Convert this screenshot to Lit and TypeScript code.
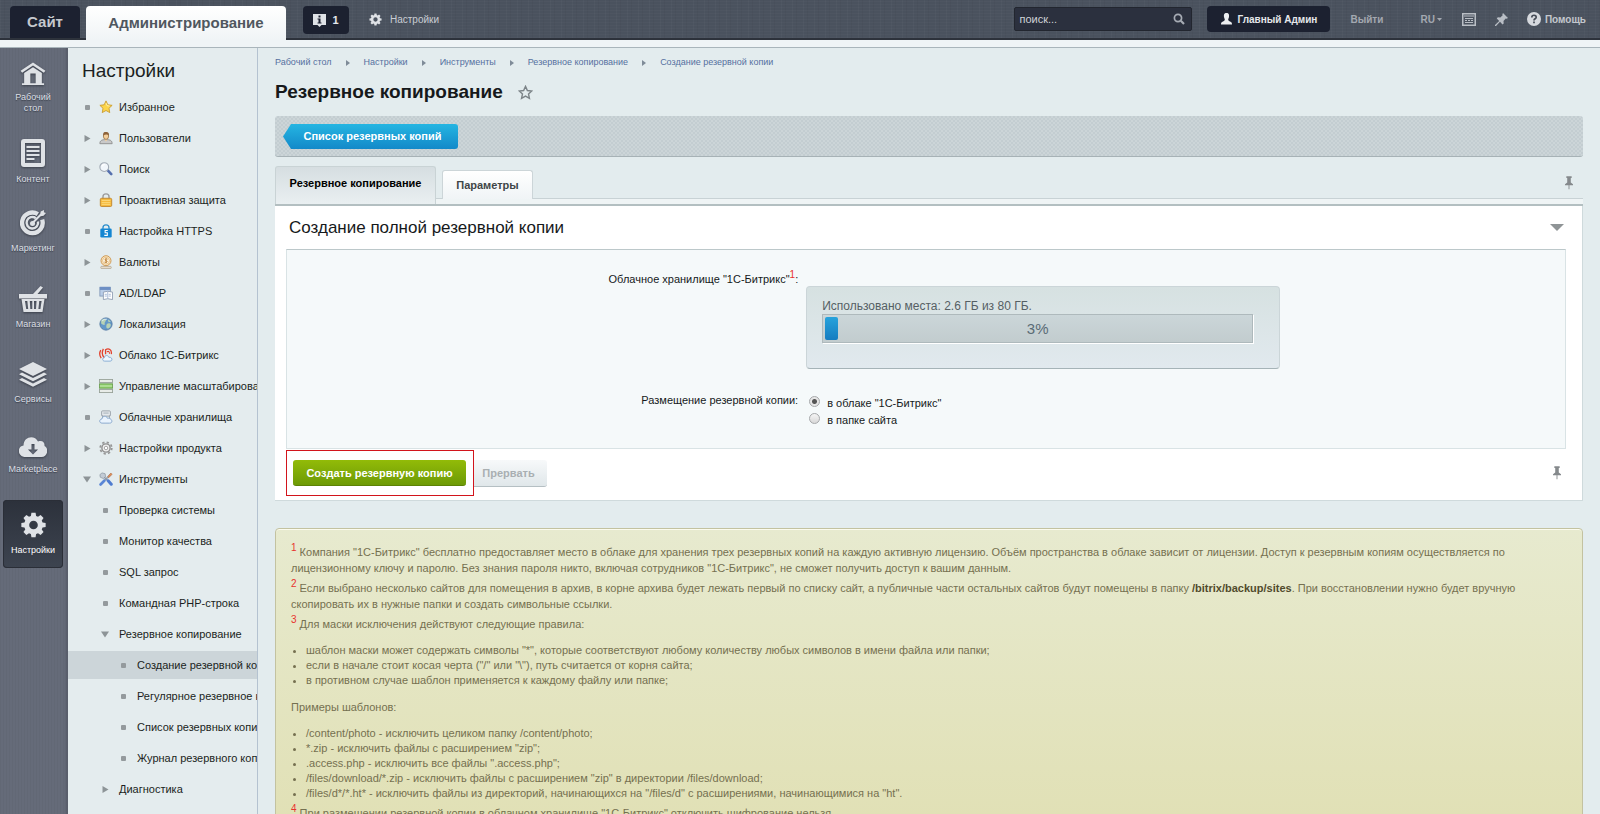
import { LitElement, html, css, svg, nothing } from "lit";
import { customElement, state } from "lit/decorators.js";
import { classMap } from "lit/directives/class-map.js";

type Kind = "leaf" | "closed" | "open";
interface MenuItem { text: string; kind: Kind; level: number; icon?: string; active?: boolean; }
interface RailItem { text: string; icon: string; w: number; h: number; box: string; far?: boolean; active?: boolean; }

const MENU: MenuItem[] = [
  { text: "Избранное", kind: "leaf", level: 1, icon: "star" },
  { text: "Пользователи", kind: "closed", level: 1, icon: "user" },
  { text: "Поиск", kind: "closed", level: 1, icon: "loupe" },
  { text: "Проактивная защита", kind: "closed", level: 1, icon: "lock" },
  { text: "Настройка HTTPS", kind: "leaf", level: 1, icon: "https" },
  { text: "Валюты", kind: "closed", level: 1, icon: "coin" },
  { text: "AD/LDAP", kind: "leaf", level: 1, icon: "ldap" },
  { text: "Локализация", kind: "closed", level: 1, icon: "globe" },
  { text: "Облако 1С-Битрикс", kind: "closed", level: 1, icon: "bxcloud" },
  { text: "Управление масштабированием", kind: "closed", level: 1, icon: "scale" },
  { text: "Облачные хранилища", kind: "leaf", level: 1, icon: "storage" },
  { text: "Настройки продукта", kind: "closed", level: 1, icon: "cog" },
  { text: "Инструменты", kind: "open", level: 1, icon: "tools" },
  { text: "Проверка системы", kind: "leaf", level: 2 },
  { text: "Монитор качества", kind: "leaf", level: 2 },
  { text: "SQL запрос", kind: "leaf", level: 2 },
  { text: "Командная PHP-строка", kind: "leaf", level: 2 },
  { text: "Резервное копирование", kind: "open", level: 2 },
  { text: "Создание резервной копии", kind: "leaf", level: 3, active: true },
  { text: "Регулярное резервное копирование", kind: "leaf", level: 3 },
  { text: "Список резервных копий", kind: "leaf", level: 3 },
  { text: "Журнал резервного копирования", kind: "leaf", level: 3 },
  { text: "Диагностика", kind: "closed", level: 2 },
];

const SMALL: Record<string, unknown> = {
  star: svg`<path d="M8 1l2.1 4.5 4.900.6-3.600 3.400.9 4.900L8 12l-4.300 2.400.9-4.900L1 6.100l4.900-.6z" fill="#fcd54a" stroke="#c99a2c" stroke-linejoin="round"/><path d="M8 3.500l1.200 3 2.800.3" fill="none" stroke="#fff3b0"/>`,
  user: svg`<path d="M1 14.500c0-3.500 2-4.700 7-4.700s7 1.200 7 4.700z" fill="#c9c9c9" stroke="#8d8d8d"/><ellipse cx="8" cy="5.800" rx="3" ry="3.800" fill="#f3cf9c" stroke="#9c7346"/><path d="M4.800 5C4.500 1.500 6 1 8 1s3.700.7 3.300 4C10 3.600 7 3.600 4.800 5z" fill="#8d623a"/><path d="M6.500 10l1.500 2 1.500-2z" fill="#f3cf9c"/>`,
  loupe: svg`<path d="M10 9.500l4 4.300" stroke="#5670ae" stroke-width="3" stroke-linecap="round"/><circle cx="6" cy="5.800" r="5" fill="#f1f6fb" stroke="#a3abb5" stroke-width="1.300"/><path d="M3.500 5a3 3 0 0 1 3-2" fill="none" stroke="#fff" stroke-width="1.500"/>`,
  lock: svg`<path d="M4.500 7V4.500a3.500 3.500 0 0 1 7 0V7" fill="none" stroke="#9c9c9c" stroke-width="1.600"/><rect x="1.500" y="6" width="13" height="9.500" rx="1.500" fill="#f5b93c" stroke="#bd822a"/><path d="M3 8.500h10M3 11h10M3 13h10" stroke="#fbdc84"/>`,
  https: svg`<path d="M4.500 7V4.500a3.500 3.500 0 0 1 7 0V7" fill="none" stroke="#2c8ecb" stroke-width="1.500"/><rect x="1.500" y="5" width="13" height="10.500" rx="1.500" fill="#1486d2"/><path d="M10 7.500H7v2.500h2.500V13H6" fill="none" stroke="#fff" stroke-width="1.200"/>`,
  coin: svg`<circle cx="8" cy="6.500" r="5.700" fill="#fbe7c4" stroke="#c98f43"/><circle cx="8" cy="6.500" r="3.900" fill="#fdf3df" stroke="#dba75c" stroke-width=".7"/><path d="M9.700 4.800C7 3.500 6 6 8 6.400c2.500.5 1.200 3-1.800 1.700M8 3.700v5.600" fill="none" stroke="#b87a2c"/><rect x="2" y="13" width="12" height="2.500" rx="1" fill="#e8dccb" stroke="#a5977f" stroke-width=".7"/>`,
  ldap: svg`<rect x="1" y="1.500" width="12" height="10" fill="#b9cde8" stroke="#8298b8"/><rect x="1" y="1" width="12" height="3.500" fill="#6d8fc4"/><path d="M5 7l5-1 5.500 1v8.500l-5.500-1-5 1z" fill="#fff" stroke="#8b99b0"/><path d="M10 6.500v8M6.500 9.500h2.500M11 9.500h2.500M6.500 11.500h2.500M11 11.500h2.500" stroke="#9fb4d3"/>`,
  globe: svg`<circle cx="8" cy="8" r="7" fill="#6398c9" stroke="#557aa2"/><path d="M2.500 4c2-2.500 5.500-2 5.500-.5S6 6 6.500 8 4 9 2.500 7.500zM9 8c2-1.500 4.500-.5 4.500 1s-1.500 4-3.500 4-2-3-1-5zM10 2.500l3.500 2.500-2.500 1z" fill="#b8d2b4"/><path d="M3.500 4.500A6 6 0 0 1 9 2.500" fill="none" stroke="#e3f1fb"/>`,
  bxcloud: svg`<path d="M2 2.500C0 6 .7 9 2.500 11.500M5 1C3 5 4 9 6 11M7.500 7V2C11-.5 15 2 14 7" fill="none" stroke="#e2432f" stroke-width="1.500"/><path d="M9 4.500c2-1.500 3-.2 3 2" fill="none" stroke="#e2432f" stroke-width="1.200"/><path d="M6.500 15c-3 0-3-3.900-.3-4 .2-3 4.300-3.200 5-.4 4-.7 5 4.400 1.500 4.400z" fill="#eef6fd" stroke="#7fa6d0"/>`,
  scale: svg`<rect x=".5" y=".5" width="15" height="3.500" fill="#e8ece8" stroke="#97a197"/><rect x=".5" y="5.500" width="15" height="5" fill="#8ccf67" stroke="#6c9d53"/><path d="M1 8h14" stroke="#d7f0c8"/><rect x=".5" y="12" width="15" height="3.500" fill="#e8ece8" stroke="#97a197"/>`,
  storage: svg`<rect x="3" y="1" width="10" height="6" rx="1" fill="#e4e8eb" stroke="#929ba3"/><path d="M5 3.500h6M4 6v4M12 6v4" stroke="#9aa6b0"/><path d="M3.500 15c-3.600 0-3.500-4.400-.2-4.700.4-3.800 5.500-4 6.300-.9C14.500 8.500 17 15 12 15z" fill="#e9f3fd" stroke="#7fa0c8"/>`,
  cog: svg`<circle cx="8" cy="8" r="6.600" fill="none" stroke="#969696" stroke-width="2" stroke-dasharray="2.600 2.580"/><circle cx="8" cy="8" r="4.700" fill="#efefef" stroke="#8e8e8e" stroke-width="1.600"/><circle cx="8" cy="8" r="2" fill="#fff" stroke="#999"/>`,
  tools: svg`<path d="M2.500 13.500L13 3" stroke="#98a4b1" stroke-width="2"/><path d="M1 3l2.500-2L7 2l.5 3.500-2.500 2L1.500 6z" fill="#c2cbd5" stroke="#7f8a96" stroke-width=".7"/><path d="M6 6l3.500 3.500" stroke="#8d98a5" stroke-width="1.500"/><path d="M10.500 10l3.500 4" stroke="#4f7cd0" stroke-width="3.500" stroke-linecap="round"/><path d="M1.800 14.300L6 10" stroke="#5a86d6" stroke-width="3" stroke-linecap="round"/><path d="M10 5.500l3.500-4.300 1.500 1.500-4 3.800z" fill="#e5945c" stroke="#ad6842" stroke-width=".7"/>`,
};

const RAIL: RailItem[] = [
  { text: "Рабочий стол", icon: "home", w: 26, h: 23, box: "0 1 28 26" },
  { text: "Контент", icon: "doc", w: 24, h: 28, box: "2 0 24 28" },
  { text: "Маркетинг", icon: "target", w: 26, h: 26, box: "1 1 27 27" },
  { text: "Магазин", icon: "basket", w: 28, h: 26, box: "0 0 28 26", far: true },
  { text: "Сервисы", icon: "layers", w: 28, h: 25, box: "0 2 28 25", far: true },
  { text: "Marketplace", icon: "cloud", w: 28, h: 20, box: "0 5 28 20", far: true },
  { text: "Настройки", icon: "gear", w: 25, h: 26, box: "0 0 28 30", active: true },
];

const GEAR = svg`<path fill-rule="evenodd" d="M11.600 1h4.800l.6 3.600 2.200.9 3-2.100 3.400 3.400-2.100 3 .9 2.200 3.600.6v4.800l-3.600.6-.9 2.200 2.100 3-3.400 3.400-3-2.100-2.200.9-.6 3.600h-4.800l-.6-3.600-2.200-.9-3 2.100-3.400-3.400 2.100-3-.9-2.200L0 17.400v-4.800l3.600-.6.900-2.200-2.100-3 3.400-3.400 3 2.100 2.200-.9zM14 10a5 5 0 1 0 0 10 5 5 0 0 0 0-10z"/>`;

const BIG: Record<string, unknown> = {
  home: svg`<path d="M14 1.500l14 9.500-1.700 2.200L14 4.900 1.700 13.200 0 11z"/><path fill-rule="evenodd" d="M4 13.500L14 7l10 6.500V25h2.500v2h-25v-2H4zM11 14v11h6V14z"/>`,
  doc: svg`<path fill-rule="evenodd" d="M5 0h18a3 3 0 0 1 3 3v22a3 3 0 0 1-3 3H5a3 3 0 0 1-3-3V3a3 3 0 0 1 3-3zm1 4v20h16V4z"/><path d="M7.500 7h13v2h-13zM7.500 11h13v2h-13zM7.500 15h13v2h-13zM7.500 19h8v2h-8z"/>`,
  target: svg`<path fill="none" stroke="#dfe2e6" stroke-width="4.500" d="M19.500 5.300A10.700 10.700 0 1 0 24 11"/><path fill="none" stroke="#dfe2e6" stroke-width="2.500" d="M17.500 9.500A6 6 0 1 0 19.700 13"/><circle cx="14" cy="15" r="2.600"/><path d="M13 14l9-9 .5-2.500L26 1l-.2 2.300L28 4l-2.500 3-3 .5-8 8z"/>`,
  basket: svg`<path d="M0 8h28v4.500H0zM14 8l7.500-8L24 1.500 18.500 8z"/><path fill-rule="evenodd" d="M2.500 13h23L23.500 26h-19zM6 15l1.200 8h2l-.9-8zm4.800 0l.5 8h2v-8zm4.200 0v8h2l.5-8zm5.300 0l-.9 8h2l1.200-8z"/>`,
  layers: svg`<path d="M14 2l14 7-14 7L0 9zM3 12.500l11 5.500 11-5.500 3 1.800-14 7-14-7zM3 18l11 5.500L25 18l3 1.800-14 7-14-7z"/>`,
  cloud: svg`<path fill-rule="evenodd" d="M6.500 25C-2 25-2 14 4.500 13.500 4.500 4 16 2.500 19 9.500c4.500-1.500 7 1 6.500 4.500 4.500 2 3.500 11-3 11zM12.500 12v5.500H9l5 5 5-5h-3.500V12z"/>`,
  gear: GEAR,
};

const rootFont = css`
  * { box-sizing: border-box; }
  a { color: inherit; text-decoration: none; }
  button { font: inherit; border: 0; margin: 0; padding: 0; background: none; color: inherit; cursor: pointer; }
  ul, p, h1, h2 { margin: 0; padding: 0; }
  svg { display: block; flex: none; }
`;

@customElement("top-bar")
class TopBar extends LitElement {
  static styles = [rootFont, css`
    :host { display: block; font-size: 11px; color: #c9cdd3; }
    .bar {
      display: flex; align-items: center; height: 40px; padding: 0 14px 0 10px;
      border-bottom: 2px solid #2d323b;
      background:
        repeating-linear-gradient(90deg, #ffffff06 0 1px, transparent 1px 4px, #00000008 4px 5px, transparent 5px 11px),
        repeating-linear-gradient(0deg, #ffffff05 0 1px, transparent 1px 3px),
        #4a525e;
    }
    .site, .admin { align-self: flex-end; font-weight: bold; font-size: 15px; text-align: center; border-radius: 4px 4px 0 0; }
    .site { width: 70px; height: 32px; line-height: 32px; background: #1c2130; color: #c5c8cd; }
    .admin { width: 200px; height: 34px; margin: 0 17px -2px 6px; line-height: 33px; color: #50575f; background: linear-gradient(#fff, #f0f4f6); }
    .note { display: flex; align-items: center; justify-content: center; gap: 6px; width: 46px; height: 28px; margin-top: 2px; border-radius: 4px; background: #1c2130; color: #e7e9ec; font-weight: bold; }
    .settings { display: flex; align-items: center; gap: 8px; margin-left: 20px; font-size: 10px; }
    .grow { flex: 1; }
    .search { display: flex; align-items: center; width: 178px; height: 24px; padding: 0 6px 0 4px; border: 1px solid #22262f; border-radius: 2px; background: #2b303e; }
    .search input { flex: 1; min-width: 0; border: 0; padding: 0; background: none; font: inherit; color: #dfe1e5; outline: 0; }
    .search input::placeholder { color: #d0d3d8; opacity: 1; }
    .me { display: flex; align-items: center; justify-content: center; gap: 6px; width: 123px; height: 26px; margin: 0 20px 0 15px; border-radius: 4px; background: #1c2130; color: #e5e7ea; font-weight: bold; font-size: 10px; }
    .plain { font-weight: bold; font-size: 10px; color: #a3a8b0; }
    .lang { display: flex; align-items: center; gap: 2px; margin: 0 20px 0 37px; }
    .icons { display: flex; align-items: center; gap: 19px; }
    .help { display: flex; align-items: center; gap: 4px; color: #c3c7cd; }
    .strip { height: 8px; background: #eff4f6; border-bottom: 1px solid #a9b5bb; }
  `];
  render() {
    return html`
      <header class="bar">
        <a class="site" href="#">Сайт</a>
        <a class="admin" href="#">Администрирование</a>
        <button class="note">
          <svg width="13" height="13" viewBox="0 0 13 13" fill="#dfe2e6"><path fill-rule="evenodd" d="M0 0h13v11H8.500l-2 2-2-2H0zM5.500 1.500v2h2v-2zM4.500 4.500v1h1v3h-1v1h4v-1h-1v-4z"/></svg>1
        </button>
        <a class="settings" href="#"><svg width="13" height="13" viewBox="0 0 28 30" fill="#dfe2e6">${GEAR}</svg>Настройки</a>
        <div class="grow"></div>
        <label class="search">
          <input type="text" placeholder="поиск..." aria-label="поиск" />
          <svg width="12" height="12" viewBox="0 0 12 12" fill="none" stroke="#a6abb4"><circle cx="5" cy="5" r="3.600" stroke-width="1.700"/><path d="M7.800 7.800L11 11" stroke-width="2.200"/></svg>
        </label>
        <button class="me"><svg width="11" height="12" viewBox="0 0 11 12" fill="#eceef0"><path d="M5.500 0C8 0 8.300 2 8 4c-.2 1.200-.8 2-.8 2.500S7.500 8 9 8.500s2 1 2 3H0c0-2 .5-2.500 2-3S3.800 7 3.800 6.500 3.200 5.200 3 4c-.3-2 0-4 2.500-4z"/></svg>Главный Админ</button>
        <a class="plain" href="#">Выйти</a>
        <button class="plain lang">RU<svg width="5" height="3" viewBox="0 0 5 3" fill="#a3a8b0"><path d="M0 0h5L2.500 3z"/></svg></button>
        <div class="icons">
          <svg width="14" height="13" viewBox="0 0 14 13" fill="none" stroke="#b9bec5"><rect x=".75" y=".75" width="12.500" height="11.500" stroke-width="1.500"/><path d="M2 3h10M3 5.500h8M3 7.500h2m1 0h2m1 0h2M3 9.500h8"/></svg>
          <svg width="13" height="13" viewBox="0 0 13 13" fill="#b9bec5"><path d="M8 0l5 5-1.500.7-.8-.3L8.500 8l.2 2.500-1.200 1L5 8.800 1 13l-1 0 0-1 4.200-4L1.800 5.500l1-1.200 2.500.2L7.700 2.200 7.300 1.400z"/></svg>
          <a class="plain help" href="#"><svg width="14" height="14" viewBox="0 0 14 14"><circle cx="7" cy="7" r="7" fill="#d6d9de"/><path d="M4.800 5.500C4.800 2.500 9.300 2.600 9.200 5.200 9.100 6.800 7 6.700 7 8.400M7 9.500v1.800" fill="none" stroke="#454b56" stroke-width="1.700"/></svg>Помощь</a>
        </div>
      </header>
      <div class="strip"></div>`;
  }
}

@customElement("side-rail")
class SideRail extends LitElement {
  static styles = [rootFont, css`
    :host { display: block; }
    .rail {
      display: flex; flex-direction: column; align-items: center; height: 100%; padding: 14px 5px 0 3px; color: #dcdfe4; font-size: 9px; line-height: 11px;
      background: repeating-linear-gradient(90deg, #00000008 0 1px, transparent 1px 3px), linear-gradient(90deg, #656b79 94%, #585d6a);
    }
    .item { display: flex; flex-direction: column; align-items: center; gap: 7px; width: 100%; text-align: center; text-shadow: 0 1px 1px #3a3f4a; border-radius: 4px; }
    .item + .item { margin-top: 25px; }
    .item.far { margin-top: 32px; }
    .item svg { filter: drop-shadow(0 1px 1px #3a3f4a); }
    .label { max-width: 50px; display: flex; justify-content: center; }
    .active { padding: 12px 0; background: linear-gradient(#2c313b, #3d4450); box-shadow: inset 0 0 0 1px #2a2e37; color: #fff; }
  `];
  render() {
    return html`<nav class="rail">${RAIL.map(r => html`
      <a class=${classMap({ item: true, far: !!r.far, active: !!r.active })} href="#">
        <svg width=${r.w} height=${r.h} viewBox=${r.box} fill="#dfe2e6">${BIG[r.icon]}</svg>
        <span class="label">${r.text}</span>
      </a>`)}</nav>`;
  }
}

@customElement("tree-menu")
class TreeMenu extends LitElement {
  static styles = [rootFont, css`
    :host { display: block; overflow: hidden; background: #e4ecee; border-right: 1px solid #b4c2d0; color: #1b1f22; }
    .title { padding: 10px 14px 0; font-size: 19px; line-height: 26px; font-weight: normal; }
    .list { display: grid; gap: 3px; padding-top: 9px; list-style: none; }
    .row { display: flex; align-items: center; height: 28px; padding-left: 14px; font-size: 11px; white-space: nowrap; }
    .mark { display: flex; justify-content: center; width: 10px; margin-right: 7px; }
    .icon { width: 14px; margin-right: 6px; }
    .l2 { padding-left: 32px; }
    .l2 .mark, .l3 .mark { margin-right: 9px; }
    .l3 { padding-left: 50px; }
    .active { background: #ccd5d9; }
  `];
  mark(kind: Kind) {
    if (kind === "closed") return html`<svg width="7" height="7" viewBox="0 0 7 7" fill="#8d9497"><path d="M.5 0L6.500 3.500.5 7z"/></svg>`;
    if (kind === "open") return html`<svg width="8" height="7" viewBox="0 0 8 7" fill="#8d9497"><path d="M0 .5h8L4 6.500z"/></svg>`;
    return html`<svg width="5" height="5" viewBox="0 0 5 5" fill="#949a9d"><rect width="5" height="5" rx="1"/></svg>`;
  }
  render() {
    return html`<h2 class="title">Настройки</h2>
      <ul class="list">${MENU.map(m => html`<li><a href="#" class=${classMap({ row: true, l2: m.level === 2, l3: m.level === 3, active: !!m.active })}>
        <span class="mark">${this.mark(m.kind)}</span>
        ${m.icon ? html`<svg class="icon" width="14" height="14" viewBox="0 0 16 16">${SMALL[m.icon]}</svg>` : nothing}
        <span>${m.text}</span></a></li>`)}</ul>`;
  }
}

const PIN = html`<svg width="8" height="14" viewBox="0 0 9 15" fill="#85898c"><path d="M1.500 0h6v2h-1v5L9 9v1H5v4.500H4V10H0V9l2.500-2V2h-1z"/></svg>`;

@customElement("backup-page")
class BackupPage extends LitElement {
  @state() place = "cloud";
  @state() percent = 3;
  static styles = [rootFont, css`
    :host { display: block; min-width: 0; overflow: hidden; padding: 8px 17px 0; font-size: 11px; color: #16191b; background: #e3ecee; }
    .crumbs { display: flex; align-items: center; gap: 14px; font-size: 9px; line-height: 13px; color: #56709f; }
    .head { display: flex; align-items: center; gap: 15px; margin-top: 11px; line-height: 24px; }
    .head h1 { font-size: 19px; }
    .tools { display: flex; align-items: flex-start; height: 41px; margin-top: 12px; padding: 8px; border-radius: 3px; border-bottom: 1px solid #a7b2b6;
      background: repeating-conic-gradient(#c3cdd1 0 25%, #ccd5d8 0 50%) 0 0 / 4px 4px; }
    .back { height: 25px; width: 175px; padding-left: 4px; line-height: 24px; font-weight: bold; text-align: center; color: #fff; border-radius: 3px; background: linear-gradient(#25b5e2, #1389c9); clip-path: polygon(8px 0, 100% 0, 100% 100%, 8px 100%, 0 50%); }
    .tabs { display: flex; align-items: flex-end; margin-top: 9px; height: 40px; border-bottom: 2px solid #b3bfc1; background: linear-gradient(transparent 32px, #c8d2d5 32px 33px, #eff4f5 33px); }
    .tab { font-weight: bold; }
    .tab.on { align-self: stretch; width: 161px; padding-bottom: 5px; border: 1px solid #c9d3d5; border-bottom: 0; border-radius: 3px 3px 0 0; background: linear-gradient(#d6dee1, #e9eff1); color: #000; }
    .tab.off { width: 91px; height: 29px; margin: 0 0 5px 6px; color: #3f4648; border: 1px solid #ccd5d8; border-bottom: 0; border-radius: 3px 3px 0 0; background: linear-gradient(#fff, #f0f4f6); }
    .tabs .pin { margin: 0 10px 14px auto; }
    .panel { padding: 0 16px 0 11px; background: #fff; border: solid #cfdadc; border-width: 0 1px 1px 0; }
    .cap { display: flex; align-items: center; justify-content: space-between; height: 43px; padding: 0 2px 0 3px; }
    .cap h2 { font-size: 17px; font-weight: normal; }
    .form { display: grid; grid-template-columns: 40% 1fr; column-gap: 8px; padding: 20px 0; border: 1px solid #d9e3e5; border-top-color: #bcc8ca; background: #f5f9fa; min-height: 200px; }
    .name { padding-top: 1px; text-align: right; line-height: 16px; }
    sup { font-size: 10px; line-height: 8px; color: #e8322e; }
    .usage { width: 474px; max-width: 98%; height: 83px; margin-top: 16px; padding: 12px 26px 0 15px; border: 1px solid #cbd5d8; border-bottom-color: #a5b3b7; border-radius: 4px; background: linear-gradient(#d6e1e1, #e1e9ee); color: #555f64; font-size: 12px; line-height: 15px; }
    .bar { position: relative; display: flex; height: 29px; padding: 2px; border: 1px solid #aeb9bc; box-shadow: 1px 1px 0 #fff; background: linear-gradient(#cbd6d9, #c2ccce); }
    .fill { border-radius: 2px; background: linear-gradient(#27a3dc, #167cc0); }
    .pct { position: absolute; inset: 0; text-align: center; font-size: 15px; line-height: 28px; color: #5a6c76; }
    .place { margin-top: 22px; }
    .choices { display: grid; gap: 1px; margin: 26px 0 0 3px; align-content: start; }
    .choice { display: flex; align-items: center; gap: 7px; height: 16px; }
    .choice input { appearance: none; width: 11px; height: 11px; margin: 0 0 3px; border: 1px solid #a6a8aa; border-radius: 50%; background: linear-gradient(#f5f5f5, #d8d8d8); }
    .choice input:checked { background: radial-gradient(circle, #555 0 2px, #e6e6e6 3px); }
    .actions { display: flex; align-items: center; padding: 1px 0 4px; }
    .ring { display: flex; align-items: center; width: 188px; height: 46px; padding-left: 6px; border: 1px solid #d2141c; }
    .go { width: 173px; height: 26px; border-radius: 3px; font-weight: bold; color: #fff; background: linear-gradient(#92bb08, #6d9a06); border-bottom: 1px solid #5c8204; }
    .stop { width: 73px; height: 27px; padding-right: 4px; font-weight: bold; color: #a9afb2; background: linear-gradient(#f7f9fa, #e0e7ea); border-bottom: 1px solid #b5bfc3; border-radius: 0 3px 3px 0; }
    .actions .pin { margin: 0 5px 0 auto; }
    .notes { margin-top: 27px; padding: 15px 15px 30px; border: 1px solid #c3c2a0; border-radius: 4px; box-shadow: inset 0 1px 0 #fbfbee; background: linear-gradient(#e7eacf, #e0dfb2 330px); color: #757050; }
    .notes p { line-height: 16px; margin-bottom: 4px; }
    .notes b { color: #514b2c; }
    .notes ul { margin: 11px 0; line-height: 15px; padding-left: 15px; }
    .notes ul.samples { margin-bottom: 4px; }
  `];
  render() {
    const crumbs = ["Рабочий стол", "Настройки", "Инструменты", "Резервное копирование", "Создание резервной копии"];
    const rules = [
      'шаблон маски может содержать символы "*", которые соответствуют любому количеству любых символов в имени файла или папки;',
      'если в начале стоит косая черта ("/" или "\\"), путь считается от корня сайта;',
      "в противном случае шаблон применяется к каждому файлу или папке;",
    ];
    const samples = [
      "/content/photo - исключить целиком папку /content/photo;",
      '*.zip - исключить файлы с расширением "zip";',
      '.access.php - исключить все файлы ".access.php";',
      '/files/download/*.zip - исключить файлы с расширением "zip" в директории /files/download;',
      '/files/d*/*.ht* - исключить файлы из директорий, начинающихся на "/files/d" с расширениями, начинающимися на "ht".',
    ];
    return html`
      <nav class="crumbs">${crumbs.map((c, i) => html`${i ? html`<svg width="4" height="6" viewBox="0 0 4 6" fill="#7f8b98"><path d="M0 0l4 3-4 3z"/></svg>` : nothing}<a href="#">${c}</a>`)}</nav>
      <div class="head"><h1>Резервное копирование</h1>
        <svg width="15" height="15" viewBox="0 0 16 16" fill="none" stroke="#7c8488" stroke-width="1.500"><path d="M8 1.500l2 4.400 4.700.5-3.500 3.200 1 4.700L8 11.900l-4.200 2.400 1-4.700L1.300 6.400 6 5.900z"/></svg>
      </div>
      <div class="tools"><a class="back" href="#">Список резервных копий</a></div>
      <div class="tabs">
        <button class="tab on">Резервное копирование</button>
        <button class="tab off">Параметры</button>
        <button class="pin" aria-label="Закрепить">${PIN}</button>
      </div>
      <section class="panel">
        <div class="cap"><h2>Создание полной резервной копии</h2>
          <svg width="14" height="7" viewBox="0 0 14 7" fill="#8f9496"><path d="M0 0h14L7 7z"/></svg></div>
        <div class="form">
          <div class="name">Облачное хранилище "1С-Битрикс"<sup>1</sup>:</div>
          <div class="usage">Использовано места: 2.6 ГБ из 80 ГБ.
            <div class="bar"><div class="fill" style="width:${this.percent}%"></div><span class="pct">${this.percent}%</span></div>
          </div>
          <div class="name place">Размещение резервной копии:</div>
          <div class="choices">
            <label class="choice"><input type="radio" name="place" .checked=${this.place === "cloud"} @change=${() => (this.place = "cloud")} />в облаке "1С-Битрикс"</label>
            <label class="choice"><input type="radio" name="place" .checked=${this.place === "folder"} @change=${() => (this.place = "folder")} />в папке сайта</label>
          </div>
        </div>
        <div class="actions">
          <div class="ring"><button class="go">Создать резервную копию</button></div>
          <button class="stop" disabled>Прервать</button>
          <button class="pin" aria-label="Закрепить">${PIN}</button>
        </div>
      </section>
      <section class="notes">
        <p><sup>1</sup> Компания "1С-Битрикс" бесплатно предоставляет место в облаке для хранения трех резервных копий на каждую активную лицензию. Объём пространства в облаке зависит от лицензии. Доступ к резервным копиям осуществляется по лицензионному ключу и паролю. Без знания пароля никто, включая сотрудников "1С-Битрикс", не сможет получить доступ к вашим данным.</p>
        <p><sup>2</sup> Если выбрано несколько сайтов для помещения в архив, в корне архива будет лежать первый по списку сайт, а публичные части остальных сайтов будут помещены в папку <b>/bitrix/backup/sites</b>. При восстановлении нужно будет вручную скопировать их в нужные папки и создать символьные ссылки.</p>
        <p><sup>3</sup> Для маски исключения действуют следующие правила:</p>
        <ul>${rules.map(r => html`<li>${r}</li>`)}</ul>
        <p>Примеры шаблонов:</p>
        <ul class="samples">${samples.map(r => html`<li>${r}</li>`)}</ul>
        <p><sup>4</sup> При размещении резервной копии в облачном хранилище "1С-Битрикс" отключить шифрование нельзя.</p>
      </section>`;
  }
}

@customElement("app-root")
class AppRoot extends LitElement {
  static styles = css`
    :host { display: flex; flex-direction: column; height: 100vh; overflow: hidden; font-family: "Liberation Sans", Arial, sans-serif; background: #e3ecee; }
    .body { display: grid; grid-template-columns: 68px 190px 1fr; flex: 1; min-height: 0; }
  `;
  render() {
    return html`<top-bar></top-bar><div class="body"><side-rail></side-rail><tree-menu></tree-menu><backup-page></backup-page></div>`;
  }
}
